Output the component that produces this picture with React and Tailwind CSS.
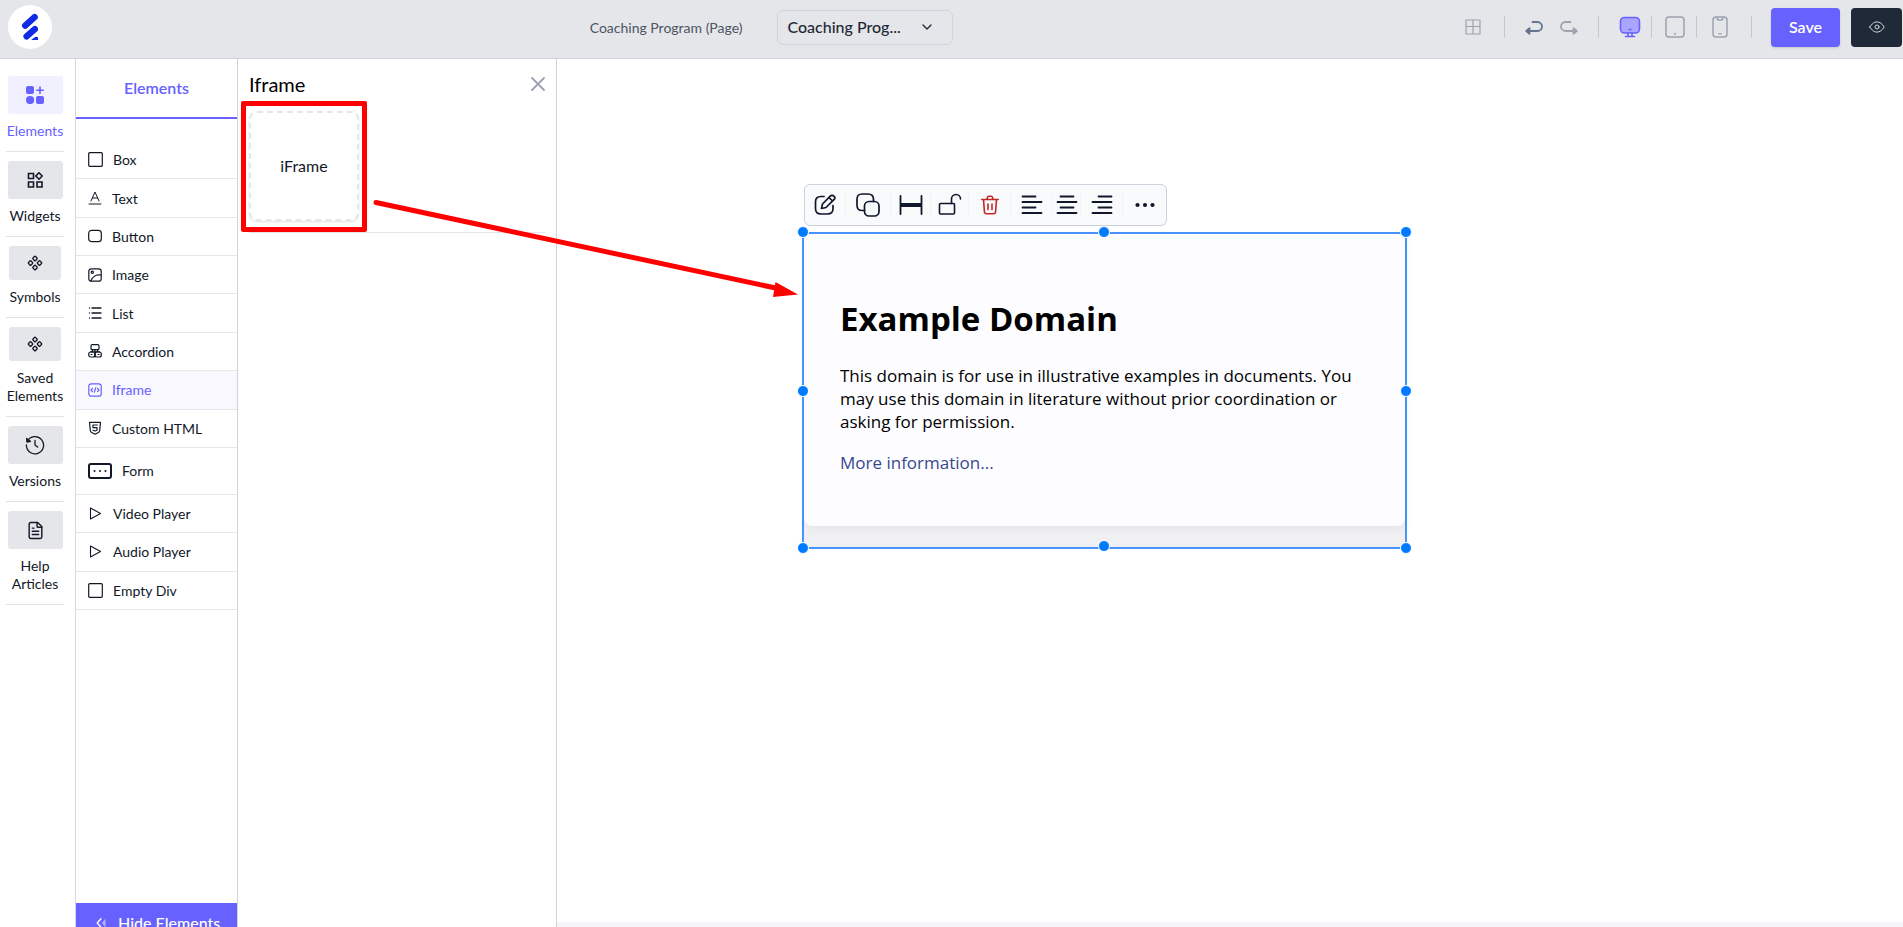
import { ChevronDown, FileText } from "lucide-react";

function Svg({ size = 16, box = 24, sw = 1.5, className = "", children }) {
  return (
    <svg
      width={size}
      height={size}
      viewBox={`0 0 ${box} ${box}`}
      fill="none"
      stroke="currentColor"
      strokeWidth={sw}
      strokeLinecap="round"
      strokeLinejoin="round"
      className={`shrink-0 ${className}`}
      aria-hidden="true"
    >
      {children}
    </svg>
  );
}

const Logo = () => (
  <svg width="18" height="28" viewBox="0 0 18 28" fill="none" stroke="#0f2be6" aria-hidden="true">
    <clipPath id="logo-clip">
      <path d="M0 0h17v27H0z" />
    </clipPath>
    <g clipPath="url(#logo-clip)" strokeWidth="6.4" strokeLinecap="round">
      <path d="M4.2 12.6 13.6 4.2M5.6 23.4l8.2-7.2" />
      <path d="M13.2 29l2-1.6" strokeWidth="7" />
    </g>
  </svg>
);

const ElementsIcon = () => (
  <svg width="18" height="18" viewBox="0 0 18 18" fill="currentColor" aria-hidden="true">
    <rect x="0" y="0" width="8" height="8" rx="2" />
    <circle cx="4.100" cy="14" r="4.100" />
    <rect x="10" y="10" width="8" height="8" rx="2" />
    <path d="M13.2 0.5h1.6v3h3v1.6h-3v3h-1.6v-3h-3V3.500h3z" />
  </svg>
);

const WidgetsIcon = () => (
  <Svg box={16} sw={1.6}>
    <path d="M1.500 1.500h5v5h-5zM1.500 10h5v5h-5zM10 10h5v5h-5zM12 0.800 15.200 4 12 7.200 8.800 4z" strokeLinejoin="miter" />
  </Svg>
);

const SymbolsIcon = () => (
  <Svg box={16} sw={1.300}>
    <rect x="-1.800" y="-1.800" width="3.600" height="3.600" rx=".8" transform="translate(8 3.500) rotate(45)" />
    <rect x="-1.800" y="-1.800" width="3.600" height="3.600" rx=".8" transform="translate(8 12.500) rotate(45)" />
    <rect x="-1.800" y="-1.800" width="3.600" height="3.600" rx=".8" transform="translate(3.500 8) rotate(45)" />
    <rect x="-1.800" y="-1.800" width="3.600" height="3.600" rx=".8" transform="translate(12.500 8) rotate(45)" />
  </Svg>
);

const HistoryIcon = () => (
  <Svg size={20} box={20} sw={1.300}>
    <path d="M2.400 6.200A8.600 8.600 0 1 1 1.400 10M10 5.500V10l2.600 2" />
    <path d="M1.600 3.400 2 7l3.600-.6z" fill="currentColor" />
  </Svg>
);

const BoxIcon = () => (
  <Svg size={15} box={15} sw={1.200}>
    <rect x=".7" y=".7" width="13.600" height="13.600" rx="1" />
  </Svg>
);

const TextIcon = () => (
  <Svg size={14} box={14} sw={1}>
    <path d="M3 10 7 1l4 9M4.300 7h5.400M1 13h12" />
  </Svg>
);

const ButtonIcon = () => (
  <Svg size={14} box={14} sw={1.200}>
    <rect x=".7" y="1.300" width="12.600" height="11.400" rx="3" />
  </Svg>
);

const ImageIcon = () => (
  <Svg size={14} box={14} sw={1.200}>
    <rect x=".8" y=".8" width="12.400" height="12.400" rx="2.500" />
    <circle cx="4.300" cy="4.300" r="1.100" />
    <path d="M3 13C4 9 8 6.500 13 7" />
  </Svg>
);

const ListIcon = () => (
  <Svg size={14} box={14} sw={1.300}>
    <path d="M4 2h9M4 7h9M4 12h9M1.500 2h.01M1.500 7h.01M1.500 12h.01" />
  </Svg>
);

const AccordionIcon = () => (
  <Svg size={14} box={14} sw={1.200}>
    <rect x="3" y=".7" width="8" height="5" rx="1.200" />
    <path d="M7 6v7M2.500 7.800h9M4.500 6v1.800M9.500 6v1.800" />
    <rect x=".7" y="8" width="6.300" height="5" rx="2" />
    <rect x="7" y="8" width="6.300" height="5" rx="2" />
    <path d="M3 10.500h1M10 10.500h1" />
  </Svg>
);

const IframeIcon = () => (
  <Svg size={14} box={14} sw={1.200}>
    <rect x=".8" y=".8" width="12.400" height="12.400" rx="2.500" />
    <path d="M4.500 5.300 3 7l1.500 1.700M9.500 5.300 11 7 9.500 8.700M7.700 4.800l-1.400 4.400" />
  </Svg>
);

const HtmlIcon = () => (
  <Svg size={14} box={14} sw={1.200}>
    <path d="M1.500 1.300h11l-.8 8.200c-.1 1-.6 1.600-1.400 2L7 13.200l-3.300-1.700c-.8-.4-1.300-1-1.400-2z" />
    <path d="M9.300 4H5v2.700h4v2.600l-2 .7-2-.7" />
  </Svg>
);

const FormIcon = () => (
  <svg width="24" height="16" viewBox="0 0 24 16" fill="none" stroke="currentColor" className="shrink-0" aria-hidden="true">
    <rect x="1" y="1" width="22" height="14" rx="2" strokeWidth="2" />
    <path d="M6.500 8h.01M12 8h.01M17.500 8h.01" strokeWidth="2" strokeLinecap="round" />
  </svg>
);

const PlayIcon = () => (
  <Svg size={15} box={15} sw={1.100}>
    <path d="M2.500 2v11l10-5.500z" />
  </Svg>
);

const railItems = [
  { label: "Elements", icon: <ElementsIcon />, active: true },
  { label: "Widgets", icon: <WidgetsIcon /> },
  { label: "Symbols", icon: <SymbolsIcon />, small: true },
  { label: "Saved Elements", icon: <SymbolsIcon />, small: true },
  { label: "Versions", icon: <HistoryIcon /> },
  { label: "Help Articles", icon: <FileText size={19} strokeWidth={1.800} /> },
];

const elements = [
  { label: "Box", icon: <BoxIcon /> },
  { label: "Text", icon: <TextIcon /> },
  { label: "Button", icon: <ButtonIcon /> },
  { label: "Image", icon: <ImageIcon /> },
  { label: "List", icon: <ListIcon /> },
  { label: "Accordion", icon: <AccordionIcon /> },
  { label: "Iframe", icon: <IframeIcon />, active: true },
  { label: "Custom HTML", icon: <HtmlIcon /> },
  { label: "Form", icon: <FormIcon />, tall: true },
  { label: "Video Player", icon: <PlayIcon /> },
  { label: "Audio Player", icon: <PlayIcon /> },
  { label: "Empty Div", icon: <BoxIcon /> },
];

const Separator = ({ className = "" }) => <span className={`h-[22px] w-px bg-[#c3c7ce] ${className}`} />;

function Header() {
  return (
    <header className="flex h-[59px] shrink-0 items-center border-b border-[#d1d3da] bg-[#e5e6ea] pl-2 pb-1">
      <div className="mr-[6px] flex flex-1 items-center justify-between">
        <a href="#home" aria-label="Home" className="flex size-11 items-center justify-center rounded-full bg-white">
          <Logo />
        </a>
        <div className="flex items-center gap-[34px]">
          <span className="text-[14px] text-[#4b5563]">Coaching Program (Page)</span>
          <button
            type="button"
            className="flex h-[35px] w-[176px] items-center justify-between rounded-md border border-[#d1d5db] pr-[17px] pl-[10px] text-[16px] font-medium text-[#1f2937]"
          >
            Coaching Prog...
            <ChevronDown size={16} strokeWidth={2} />
          </button>
        </div>
      </div>
      <div className="flex flex-1 items-center justify-end text-[#9ca3af]">
        <button type="button" aria-label="Grid">
          <Svg box={16} sw={1.200}>
            <path d="M1 1h14v14H1zM8 1v14M1 7.500h14" />
          </Svg>
        </button>
        <Separator className="ml-[23px] mr-5" />
        <button type="button" aria-label="Undo" className="text-[#64748b]">
          <Svg size={18} box={18} sw={1.800}>
            <path d="M7.500 4h5a4.200 4.200 0 0 1 0 9H3" />
            <path d="M4.500 10.200v5.600L1.200 13z" fill="currentColor" />
          </Svg>
        </button>
        <button type="button" aria-label="Redo" className="ml-[17px]">
          <Svg size={18} box={18} sw={1.800}>
            <path d="M10.500 4h-5a4.200 4.200 0 0 0 0 9H15" />
            <path d="M13.500 10.200v5.600l3.300-2.800z" fill="currentColor" />
          </Svg>
        </button>
        <Separator className="mx-5" />
        <button type="button" aria-label="Desktop" className="text-[#6761ff]">
          <Svg size={22} box={22} sw={1.600}>
            <rect x="1.500" y="1.500" width="19" height="15.500" rx="4" fill="#aaa6ff" />
            <path d="M9 17v3M13 17v3M6.500 20.500h9M10 13.500h2" />
          </Svg>
        </button>
        <Separator className="ml-[10px] mr-3" />
        <button type="button" aria-label="Tablet">
          <Svg size={22} box={22} sw={1.500}>
            <rect x="2" y="1" width="18" height="20" rx="3" />
            <path d="M11 17.700h.01" strokeWidth="2" />
          </Svg>
        </button>
        <Separator className="ml-[10px] mr-3" />
        <button type="button" aria-label="Mobile">
          <Svg size={22} box={22} sw={1.500}>
            <rect x="4" y="1" width="14" height="20" rx="3" />
            <path d="M8 1.500c0 2 .8 2.500 2 2.500h2c1.200 0 2-.5 2-2.500M10 17.700h2" />
          </Svg>
        </button>
        <Separator className="mr-[19px] ml-5" />
        <button type="button" className="h-[39px] w-[69px] rounded bg-[#6761ff] text-[16px] font-semibold text-white shadow">
          Save
        </button>
        <button type="button" aria-label="Preview" className="ml-[11px] mr-px flex h-[39px] w-[51px] items-center justify-center rounded bg-[#1f2937] text-[#d1d5db]">
          <Svg box={16} sw={1}>
            <path d="M.8 8C3 4.500 5.300 2.900 8 2.900S13 4.500 15.200 8C13 11.500 10.700 13.100 8 13.100S3 11.500.8 8z" />
            <circle cx="8" cy="8" r="2" />
          </Svg>
        </button>
      </div>
    </header>
  );
}

function Rail() {
  return (
    <nav className="flex w-[76px] shrink-0 flex-col border-r border-[#d6d8dd] pt-[17px] pl-[6px]">
      {railItems.map((item) => (
        <a
          key={item.label}
          href={`#${item.label}`}
          className={`mb-[9px] flex w-[58px] flex-col items-center border-b border-[#e0e2e6] pb-[11px] text-center text-[14px] leading-[18px] ${
            item.active ? "text-[#6761ff]" : "text-[#111827]"
          }`}
        >
          <span
            className={`mb-2 flex items-center justify-center rounded-[3px] ${item.small ? "h-[34px] w-[52px]" : "h-[38px] w-[55px]"} ${
              item.active ? "bg-[#f1f0ff]" : "bg-[#e5e6ea]"
            }`}
          >
            {item.icon}
          </span>
          {item.label}
        </a>
      ))}
    </nav>
  );
}

function ElementsPanel() {
  return (
    <aside className="flex w-[162px] shrink-0 flex-col border-r border-[#d1d3d8]">
      <h2 className="flex h-[60px] shrink-0 items-center justify-center border-b-2 border-[#6761ff] text-[16px] font-semibold text-[#6761ff]">
        Elements
      </h2>
      <ul className="mt-[22px] flex h-[469px] shrink-0 flex-col">
        {elements.map((el) => (
          <li key={el.label} className={`border-b border-[#e5e7eb] ${el.tall ? "h-[47px]" : "flex-1"}`}>
            <button
              type="button"
              className={`flex h-full w-full items-center gap-[10px] pl-3 text-left text-[14px] ${
                el.active ? "bg-[#f9f8ff] text-[#6761ff]" : "text-[#111827]"
              }`}
            >
              {el.icon}
              {el.label}
            </button>
          </li>
        ))}
      </ul>
      <button type="button" className="mt-auto flex h-10 shrink-0 items-center gap-3 bg-[#6761ff] pl-5 text-[16px] font-medium text-white">
        <Svg size={10} box={10} sw={1.400}>
          <path d="M5 .8 1.200 5 5 9.200" />
          <path d="M9.500.5v9L6 5z" fill="currentColor" stroke="none" opacity=".5" />
        </Svg>
        Hide Elements
      </button>
    </aside>
  );
}

function IframePanel() {
  return (
    <aside className="w-[319px] shrink-0 border-r border-[#d1d3d8] px-[11px] pt-[13px]">
      <div className="flex h-6 items-center justify-between">
        <h2 className="text-[20px] text-black">Iframe</h2>
        <button type="button" aria-label="Close" className="text-[#9ca3af]">
          <Svg size={14} box={14} sw={1.800}>
            <path d="M1 1l12 12M13 1 1 13" />
          </Svg>
        </button>
      </div>
      <div className="border-b border-[#e2e5ea] pt-[15px] pb-[11px]">
        <div className="relative flex size-[110px] items-center justify-center rounded-lg border-2 border-dashed border-[#e5e6ea] text-[16px] text-[#111827] shadow-sm">
          iFrame
          <span className="absolute -inset-x-[10px] -top-3 -bottom-[13px] rounded-[2px] border-[5px] border-[#ff0000]" />
        </div>
      </div>
    </aside>
  );
}

const tools = [
  {
    label: "Edit",
    width: "w-[41px]",
    icon: (
      <Svg size={24} sw={1.700}>
        <path d="M11 3.500H8c-4 0-5.500 1.500-5.500 5.500v6.500c0 4 1.500 5.500 5.500 5.500h6.500c4 0 5.500-1.500 5.500-5.500v-3" />
        <path d="M17.500 2.800 9.500 11 8.500 15.500l4.500-1 8.200-8.200c1-1 .9-2.100 0-3s-2.700-1.500-3.700-.5zM16 4.500 19.500 8" />
      </Svg>
    ),
  },
  {
    label: "Duplicate",
    width: "w-[45px]",
    icon: (
      <Svg size={24} sw={1.700}>
        <path d="M8.500 17.500H6.500c-4 0-5.500-1.500-5.500-5.500V6.500C1 2.500 2.500 1 6.500 1H12c4 0 5.500 1.500 5.500 5.500v2" />
        <rect x="8.500" y="8.500" width="14.500" height="14.500" rx="4.500" />
      </Svg>
    ),
  },
  {
    label: "Width",
    width: "w-[40px]",
    icon: (
      <Svg size={24} sw={1.800}>
        <path d="M1.500 3v18M22.500 3v18" />
        <path d="M2 12h20" strokeWidth="4" strokeLinecap="butt" />
      </Svg>
    ),
  },
  {
    label: "Unlock",
    width: "w-[38px]",
    icon: (
      <Svg size={24} sw={1.600}>
        <rect x="1.500" y="10.500" width="15" height="10.500" rx="1" />
        <path d="M13.500 10.500V6a4.500 4.500 0 0 1 9 0" />
      </Svg>
    ),
  },
  {
    label: "Delete",
    width: "w-[42px]",
    red: true,
    icon: (
      <Svg size={20} box={20} sw={1.600}>
        <path d="M1.800 4.500h16.400M3.500 4.500l.9 12c.1 1.500.9 2.300 2.200 2.300h6.800c1.300 0 2.100-.8 2.200-2.300l.9-12M6.800 4.500l.6-2c.2-.8.700-1.200 1.500-1.200h2.200c.8 0 1.300.4 1.500 1.200l.6 2M8 9v5.500M12 9v5.500" />
      </Svg>
    ),
  },
  {
    label: "Align left",
    width: "w-[42px]",
    icon: (
      <Svg size={22} box={22} sw={1.800}>
        <path d="M1.500 2.500h13M1.500 8h19M1.500 13.500h13M1.500 19h19" />
      </Svg>
    ),
  },
  {
    label: "Align center",
    width: "w-[28px]",
    icon: (
      <Svg size={22} box={22} sw={1.800}>
        <path d="M4.500 2.500h13M1.500 8h19M4.500 13.500h13M1.500 19h19" />
      </Svg>
    ),
  },
  {
    label: "Align right",
    width: "w-[42px]",
    icon: (
      <Svg size={22} box={22} sw={1.800}>
        <path d="M7.500 2.500h13M1.500 8h19M7.500 13.500h13M1.500 19h19" />
      </Svg>
    ),
  },
  {
    label: "More",
    width: "w-[43px]",
    icon: (
      <svg width="20" height="6" viewBox="0 0 20 6" fill="currentColor" aria-hidden="true">
        <circle cx="2.500" cy="3" r="2.100" />
        <circle cx="10" cy="3" r="2.100" />
        <circle cx="17.500" cy="3" r="2.100" />
      </svg>
    ),
  },
];

// resize handles sit on top of the selection outline
const handles = [
  "-top-[8px] -left-[7px]",
  "-top-[8px] left-1/2 -ml-[7px]",
  "-top-[8px] -right-[7px]",
  "top-1/2 -mt-[6px] -left-[7px]",
  "top-1/2 -mt-[6px] -right-[7px]",
  "-bottom-[7px] -left-[7px]",
  "-bottom-[5px] left-1/2 -ml-[7px]",
  "-bottom-[7px] -right-[7px]",
];

function Canvas() {
  return (
    <main className="flex flex-1 flex-col">
      <div className="pt-[125px] pl-[245px]">
        <div className="ml-[2px] flex h-[42px] w-fit items-center rounded-md border border-[#cbd2dc] bg-[#f8fafc]">
          {tools.map((tool) => (
            <button
              key={tool.label}
              type="button"
              aria-label={tool.label}
              className={`flex h-[26px] items-center justify-center border-r border-[#f1f3f6] last:border-0 ${tool.width} ${
                tool.red ? "text-[#c52626]" : "text-[#0f172a]"
              }`}
            >
              {tool.icon}
            </button>
          ))}
        </div>

        <div className="relative mt-[6px] w-[605px] border-2 border-[#4794ff] bg-[#f0f0f2] pb-[21px]">
          <article
            className="rounded-lg bg-[#fdfdff] px-9 pt-[61px] pb-[52px] text-black shadow-[2px_3px_7px_2px_rgba(0,0,0,0.03)]"
            style={{ fontFamily: '"Open Sans", "Noto Sans", sans-serif' }}
          >
            <h1 className="text-[33px] leading-[48px] font-bold">Example Domain</h1>
            <p className="mt-[21px] text-[17px] leading-[23px]">
              This domain is for use in illustrative examples in documents. You may use this domain in literature without
              prior coordination or asking for permission.
            </p>
            <p className="mt-[18px] text-[17px] leading-[23px]">
              <a href="#more" className="text-[#38488f]">
                More information...
              </a>
            </p>
          </article>
          {handles.map((pos) => (
            <span key={pos} className={`absolute size-3 rounded-full border border-white bg-[#007bff] ${pos}`} />
          ))}
        </div>
      </div>
      <div className="mt-auto h-[21px] bg-[#f6f6f8]" />
    </main>
  );
}

export default function App() {
  return (
    <div className="relative flex h-screen flex-col overflow-hidden bg-white" style={{ fontFamily: "Lato, sans-serif" }}>
      <Header />
      <div className="flex h-[calc(100vh-43px)] shrink-0">
        <Rail />
        <ElementsPanel />
        <IframePanel />
        <Canvas />
      </div>
      <svg className="pointer-events-none absolute top-[194px] left-[370px]" width="430" height="106" viewBox="0 0 430 106" aria-hidden="true">
        <path d="M6 8.500 408 94.500" stroke="#ff0000" strokeWidth="5" strokeLinecap="round" />
        <path d="M405.500 88 428 100.500 403 103z" fill="#ff0000" />
      </svg>
    </div>
  );
}
